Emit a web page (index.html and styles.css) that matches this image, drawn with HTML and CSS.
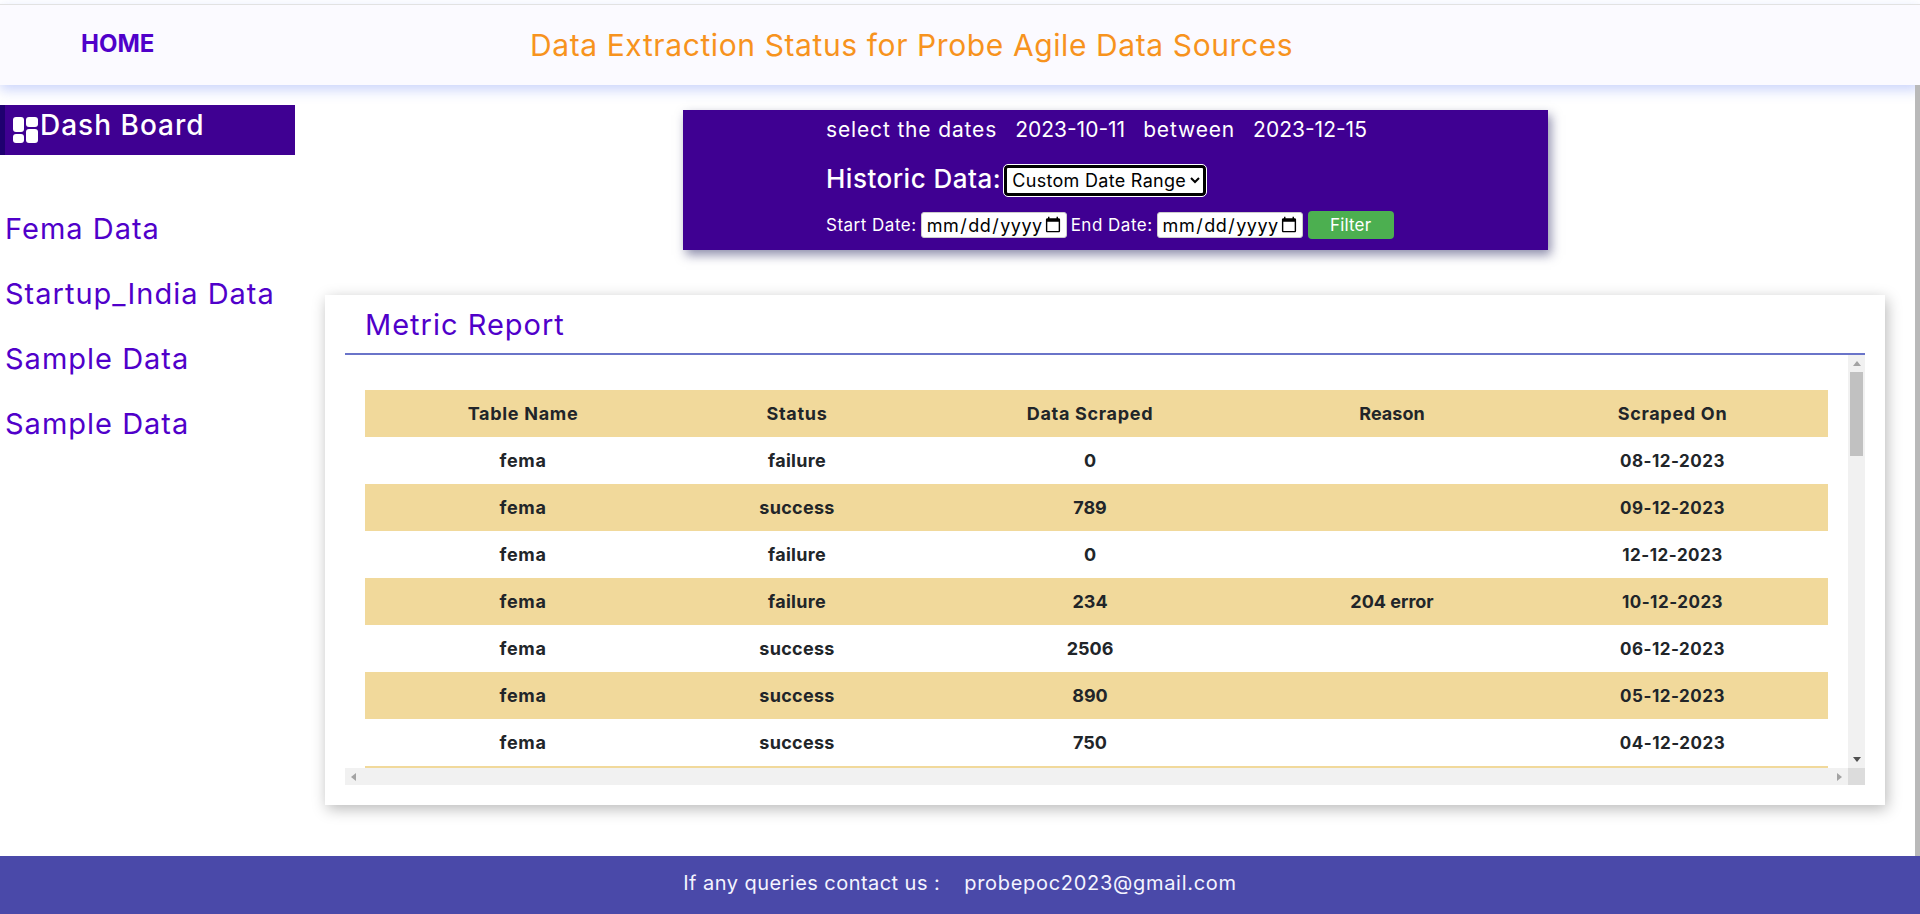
FILE: index.html
```html
<!DOCTYPE html>
<html lang="en">
<head>
    <meta charset="UTF-8">
    <meta name="viewport" content="width=device-width, initial-scale=1.0">
    <title>Data Extraction Status</title>
    <link rel="stylesheet" href="styles.css">
</head>
<body>
    <header class="topbar">
        <a class="home-link" href="#">HOME</a>
        <h1 class="page-title">Data Extraction Status for Probe Agile Data Sources</h1>
    </header>

    <div class="main">
        <aside class="sidebar">
            <div class="dash-title">
                <svg class="dash-icon" viewBox="0 0 25 26" width="25" height="26" fill="#fff">
                    <rect x="0" y="0" width="11" height="15" rx="3"/>
                    <rect x="13" y="0" width="12" height="10" rx="3"/>
                    <rect x="0" y="17" width="11" height="9" rx="3"/>
                    <rect x="13" y="12" width="12" height="14" rx="3"/>
                </svg>
                <span>Dash Board</span>
            </div>
            <nav class="side-nav">
                <a href="#">Fema Data</a>
                <a href="#">Startup_India Data</a>
                <a href="#">Sample Data</a>
                <a href="#">Sample Data</a>
            </nav>
        </aside>

        <main class="content">
            <section class="filter-box">
                <p class="date-line">
                    <span class="word">select the dates</span>
                    <span>2023-10-11</span>
                    <span class="word">between</span>
                    <span>2023-12-15</span>
                </p>
                <div class="historic-line">
                    <label for="range">Historic Data:</label>
                    <select id="range">
                        <option>Custom Date Range</option>
                        <option>Last 7 Days</option>
                        <option>Last 30 Days</option>
                    </select>
                </div>
                <div class="range-line">
                    <label for="start">Start Date:</label>
                    <input type="date" id="start">
                    <label for="end">End Date:</label>
                    <input type="date" id="end">
                    <button>Filter</button>
                </div>
            </section>

            <section class="report-card">
                <h2 class="report-title">Metric Report</h2>
                <div class="table-frame">
                    <div class="table-view">
                        <table class="report-table">
                            <thead>
                                <tr><th>Table Name</th><th>Status</th><th>Data Scraped</th><th>Reason</th><th>Scraped On</th></tr>
                            </thead>
                            <tbody>
                                <tr><td>fema</td><td>failure</td><td>0</td><td></td><td>08-12-2023</td></tr>
                                <tr><td>fema</td><td>success</td><td>789</td><td></td><td>09-12-2023</td></tr>
                                <tr><td>fema</td><td>failure</td><td>0</td><td></td><td>12-12-2023</td></tr>
                                <tr><td>fema</td><td>failure</td><td>234</td><td>204 error</td><td>10-12-2023</td></tr>
                                <tr><td>fema</td><td>success</td><td>2506</td><td></td><td>06-12-2023</td></tr>
                                <tr><td>fema</td><td>success</td><td>890</td><td></td><td>05-12-2023</td></tr>
                                <tr><td>fema</td><td>success</td><td>750</td><td></td><td>04-12-2023</td></tr>
                                <tr><td></td><td></td><td></td><td></td><td></td></tr>
                            </tbody>
                        </table>
                    </div>
                    <div class="vbar">
                        <span class="bar-btn">
                            <svg viewBox="0 0 8 5" width="8" height="5"><path d="M4 0l4 5H0z" fill="#a3a3a3"/></svg>
                        </span>
                        <span class="vbar-thumb"></span>
                        <span class="bar-btn bar-btn-end">
                            <svg viewBox="0 0 8 5" width="8" height="5"><path d="M0 0h8L4 5z" fill="#505050"/></svg>
                        </span>
                    </div>
                    <div class="hbar">
                        <span class="bar-btn">
                            <svg viewBox="0 0 5 8" width="5" height="8"><path d="M0 4l5-4v8z" fill="#a3a3a3"/></svg>
                        </span>
                        <span class="bar-btn">
                            <svg viewBox="0 0 5 8" width="5" height="8"><path d="M5 4L0 0v8z" fill="#a3a3a3"/></svg>
                        </span>
                    </div>
                    <div class="bar-corner"></div>
                </div>
            </section>
        </main>
    </div>

    <footer class="footer">
        <span class="footer-text">If any queries contact us :</span>
        <span class="footer-mail">probepoc2023@gmail.com</span>
    </footer>
</body>
</html>
```

FILE: styles.css
```css
* {
    box-sizing: border-box;
}
html, body {
    height: 100%;
}
body {
    margin: 0;
    padding-top: 4px;
    display: flex;
    flex-direction: column;
    background-color: #fff;
    font-family: Inter, "Open Sans", sans-serif;
    overflow: hidden;
}

/* top bar */
.topbar {
    height: 81px;
    flex: none;
    display: flex;
    align-items: center;
    background-color: #fbfaff;
    border-top: 1px solid #e2e2e2;
    box-shadow: 0 5px 12px rgba(70, 100, 240, 0.28);
}
.home-link {
    margin-left: 81px;
    margin-top: -4px;
    width: 449px;
    font-size: 24px;
    font-weight: 700;
    color: #5000ca;
    text-decoration: none;
}
.page-title {
    margin: 0;
    font-size: 30px;
    font-weight: 400;
    letter-spacing: 0.6px;
    color: #f7931e;
}

.main {
    flex: 1;
    display: flex;
    min-height: 0;
    position: relative;
    z-index: 1;
    border-right: 5px solid #b9b9b9;
}

/* sidebar */
.sidebar {
    width: 295px;
    flex: none;
    padding-top: 20px;
}
.dash-title {
    height: 50px;
    display: flex;
    align-items: flex-start;
    gap: 2px;
    padding: 3px 0 0 8px;
    background-color: #3f0092;
    border-left: 5px solid #1f0070;
    color: #fff;
    font-size: 28px;
    font-weight: 500;
    letter-spacing: 1px;
}
.dash-icon {
    margin-top: 9px;
    flex: none;
}
.side-nav {
    display: flex;
    flex-direction: column;
    gap: 23px;
    margin-top: 53px;
    padding-left: 5px;
}
.side-nav a {
    font-size: 29px;
    line-height: 42px;
    letter-spacing: 1px;
    color: #5000ca;
    text-decoration: none;
}

/* filter box */
.content {
    flex: 1;
    min-width: 0;
    padding: 25px 30px 0;
}
.filter-box {
    width: 865px;
    height: 140px;
    margin-left: 358px;
    padding: 4px 0 0 143px;
    background-color: #3f0092;
    color: #fff;
    box-shadow: 3px 5px 10px rgba(30, 30, 90, 0.5);
}
.date-line {
    margin: 0;
    display: flex;
    gap: 18px;
    font-size: 21px;
    line-height: 32px;
}
.word {
    letter-spacing: 0.85px;
}
.historic-line {
    display: flex;
    align-items: center;
    gap: 3px;
    height: 31px;
    margin-top: 19px;
    font-size: 26px;
    font-weight: 500;
    letter-spacing: 0.5px;
}
.historic-line label {
    padding-bottom: 5px;
}
.historic-line select {
    appearance: none;
    width: 202px;
    height: 31px;
    padding: 0 0 0 5px;
    font-family: inherit;
    font-size: 18px;
    letter-spacing: 0.3px;
    color: #000;
    border: 3px solid #000;
    outline: 1px solid #fff;
    border-radius: 4px;
    background-color: #fff;
    background-image: url("data:image/svg+xml,%3Csvg xmlns='http://www.w3.org/2000/svg' width='10' height='7'%3E%3Cpath d='M1 1l4 4 4-4' fill='none' stroke='%23000' stroke-width='2'/%3E%3C/svg%3E");
    background-repeat: no-repeat;
    background-position: right 3px center;
}
.range-line {
    display: flex;
    align-items: center;
    gap: 4px;
    margin-top: 15px;
    font-size: 17px;
    letter-spacing: 0.5px;
}
.range-line input {
    width: 146px;
    height: 26px;
    padding: 0 2px 0 4px;
    font-family: inherit;
    font-size: 18px;
    letter-spacing: 0.5px;
    border: 1px solid #ccc;
    border-radius: 3px;
    background-color: #fff;
}
.range-line button {
    width: 86px;
    height: 28px;
    margin-left: 1px;
    border: none;
    border-radius: 4px;
    background-color: #4caf50;
    color: #fff;
    font-family: inherit;
    font-size: 17px;
    letter-spacing: 0.2px;
    cursor: pointer;
}

/* report card */
.report-card {
    width: 1560px;
    height: 510px;
    margin-top: 45px;
    padding: 0 20px;
    background-color: #fff;
    box-shadow: 2px 4px 14px rgba(0, 0, 0, 0.28);
}
.report-title {
    height: 60px;
    margin: 0;
    padding: 10px 0 0 20px;
    font-size: 29px;
    font-weight: 400;
    line-height: 40px;
    letter-spacing: 1px;
    color: #5000ca;
    border-bottom: 2px solid #6a74c9;
}
.table-frame {
    display: grid;
    grid-template-columns: 1fr 17px;
    grid-template-rows: 413px 17px;
}
.table-view {
    overflow: hidden;
    padding: 35px 20px 0;
}
.report-table {
    width: 1463px;
    table-layout: fixed;
    border-collapse: collapse;
    font-size: 18px;
    font-weight: 700;
    letter-spacing: 0.7px;
    color: #212529;
    text-align: center;
}
.report-table th,
.report-table td {
    height: 47px;
    padding: 0;
}
.report-table th {
    background-color: #f1d99b;
}
.report-table th:nth-child(1) { width: 316px; }
.report-table th:nth-child(2) { width: 232px; }
.report-table th:nth-child(3) { width: 354px; }
.report-table th:nth-child(4) { width: 250px; letter-spacing: 0; }
.report-table td:nth-child(2) {
    letter-spacing: 0.3px;
}
.report-table td:nth-child(3),
.report-table td:nth-child(4) {
    letter-spacing: 0;
}
.report-table td:nth-child(5) {
    font-size: 17px;
    letter-spacing: 0.5px;
}
.report-table tbody tr:nth-child(even) {
    background-color: #f1d99b;
}

/* scrollbars, drawn because the table view doesn't really scroll here */
.vbar {
    display: flex;
    flex-direction: column;
    align-items: center;
    background-color: #f1f1f1;
}
.vbar-thumb {
    width: 13px;
    height: 84px;
    background-color: #c1c1c1;
}
.hbar {
    display: flex;
    justify-content: space-between;
    background-color: #f1f1f1;
}
.bar-btn {
    width: 17px;
    height: 17px;
    display: flex;
    align-items: center;
    justify-content: center;
    flex: none;
}
.bar-btn-end {
    margin-top: auto;
}
.bar-corner {
    background-color: #dcdcdc;
}

/* footer */
.footer {
    height: 58px;
    flex: none;
    display: flex;
    justify-content: center;
    align-items: center;
    gap: 24px;
    padding-bottom: 4px;
    background-color: #4a49a9;
    color: #f4f4ff;
    font-size: 20px;
    position: relative;
    z-index: 2;
}
.footer-text {
    letter-spacing: 0.45px;
}
.footer-mail {
    letter-spacing: 0.7px;
}
```
